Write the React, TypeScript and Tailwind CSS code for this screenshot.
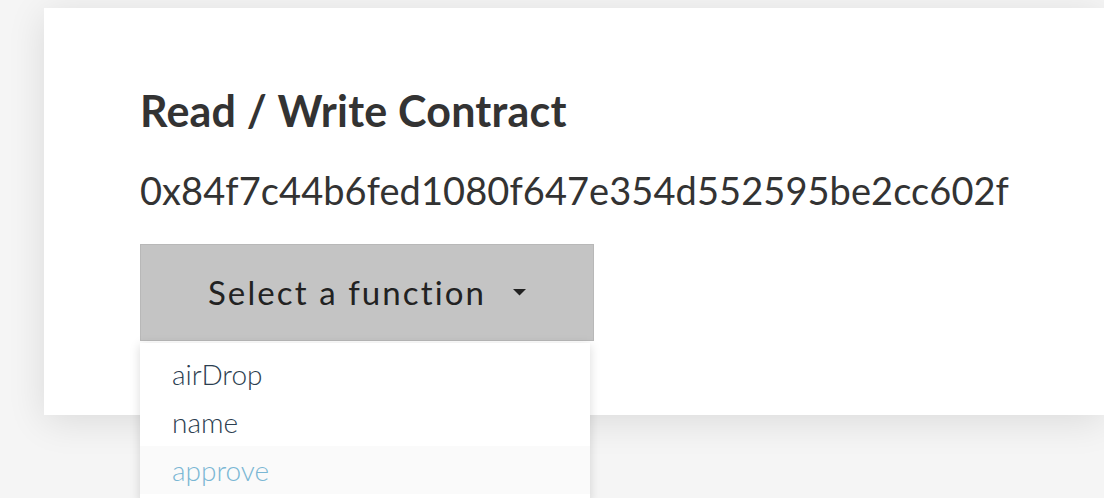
import { useState } from "react";

const functions = ["airDrop", "name", "approve"];

const App = () => {
  const [hovered] = useState("approve");

  return (
    <div className="h-[498px] w-[1104px] overflow-hidden bg-[#f5f5f5] pt-2 pl-11 font-['Lato',sans-serif]">
      {/* Card */}
      <div className="h-[407px] bg-white pl-24 pt-[77px] shadow-[0_6px_36px_rgba(0,0,0,0.11)]">
        <h1 className="text-[43px] font-bold leading-[52px] tracking-[0.2px] text-[#333]">Read / Write Contract</h1>
        <p className="mt-[30px] text-[38px] leading-[46px] tracking-[0.07px] text-[#333]">0x84f7c44b6fed1080f647e354d552595be2cc602f</p>

        {/* Select */}
        <div className="relative mt-[31px] w-[454px]">
          <button className="flex h-[97px] w-full items-center justify-center gap-[27px] border border-[#b8b8b8] bg-[#c4c4c4] text-[33px] tracking-[2.1px] text-[#222]">
            <span>Select a function</span>
            <svg width="13" height="7" viewBox="0 0 13 7">
              <path d="M0 0 L13 0 L6.5 6.5 Z" fill="#222" />
            </svg>
          </button>
          {/* Menu */}
          <ul className="absolute left-0 top-[99px] w-[450px] bg-white py-[7px] shadow-[0_2px_10px_rgba(0,0,0,0.15)]">
            {functions.map((fn) => (
              <li
                key={fn}
                className={
                  fn === hovered
                    ? "h-12 bg-[#fafafa] px-8 text-[28px] font-light leading-[48px] text-[#7ab7d4]"
                    : "h-12 px-8 text-[28px] font-light leading-[48px] text-[#2c3e50]"
                }
              >
                {fn}
              </li>
            ))}
          </ul>
        </div>
      </div>
    </div>
  );
};

export default App;
